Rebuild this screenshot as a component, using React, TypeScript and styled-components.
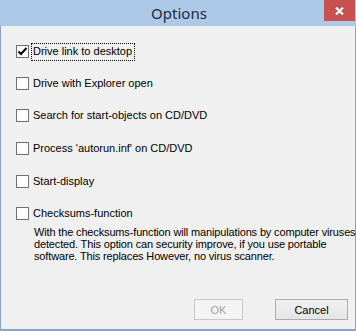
import { FC, ReactNode } from 'react';
import styled, { createGlobalStyle } from 'styled-components';

const GlobalStyle = createGlobalStyle`
    html, body {
        margin: 0;
        padding: 0;
        background: #f0f0f0;
    }
`;

const Window = styled.div`
    position: relative;
    width: 356px;
    height: 331px;
    box-sizing: border-box;
    border: 1px solid #8aa4c8;
    border-top: none;
    border-bottom-width: 2px;
    background: #f0f0f0;
    display: flex;
    flex-direction: column;
    font-family: 'Liberation Sans', Arial, sans-serif;
`;

const TitleBar = styled.div`
    height: 26px;
    margin: 0 -1px;
    background: #adc9e8;
    display: flex;
    align-items: center;
    justify-content: center;
    font-family: 'Noto Sans', 'Open Sans', sans-serif;
    font-size: 15px;
    color: #1e2a3a;
    padding-left: 2px;
`;

const CloseButton = styled.div`
    position: absolute;
    top: 0;
    right: 0;
    width: 31px;
    height: 21px;
    background: #c75050;
    display: flex;
    align-items: center;
    justify-content: center;
`;

const Body = styled.div`
    flex: 1;
    display: flex;
    flex-direction: column;
    padding: 19px 0 0 15px;
`;

const OptionList = styled.div`
    display: flex;
    flex-direction: column;
`;

const OptionRow = styled.div<{ $gap: number }>`
    display: flex;
    align-items: center;
    height: 13px;
    margin-top: ${p => p.$gap}px;
    font-size: 11px;
    color: #000;
`;

const Box = styled.div`
    width: 13px;
    height: 13px;
    box-sizing: border-box;
    border: 1px solid #707070;
    background: #fff;
    display: flex;
    align-items: center;
    justify-content: center;
    flex-shrink: 0;
`;

const Label = styled.span<{ $focused?: boolean }>`
    margin-left: 2px;
    padding: 1px 2px 2px 1px;
    border: 1px dotted ${p => (p.$focused ? '#000' : 'transparent')};
    line-height: 13px;
    white-space: nowrap;
`;

const Description = styled.div`
    margin: 6px 0 0 18px;
    font-size: 11px;
    line-height: 12px;
    letter-spacing: -0.15px;
    color: #000;
    white-space: nowrap;
`;

const Footer = styled.div`
    margin-top: auto;
    display: flex;
    justify-content: flex-end;
    gap: 32px;
    padding: 0 7px 9px 0;
`;

const Button = styled.div<{ $disabled?: boolean; $width: number }>`
    width: ${p => p.$width}px;
    height: 21px;
    box-sizing: border-box;
    border: 1px solid ${p => (p.$disabled ? '#c8c8c8' : '#acacac')};
    background: ${p => (p.$disabled ? '#f4f4f4' : 'linear-gradient(#f0f0f0, #e5e5e5)')};
    color: ${p => (p.$disabled ? '#a3a3a3' : '#000')};
    font-size: 11px;
    display: flex;
    align-items: center;
    justify-content: center;
`;

const Check: FC = () => (
    <svg width="11" height="11" viewBox="0 0 11 11">
        <path d="M1.5 5.5 L4 8 L9.5 2" fill="none" stroke="#000" strokeWidth="2" />
    </svg>
);

const Option: FC<{ gap: number; checked?: boolean; focused?: boolean; children: ReactNode }> = ({ gap, checked, focused, children }) => (
    <OptionRow $gap={gap}>
        <Box>{checked && <Check />}</Box>
        <Label $focused={focused}>{children}</Label>
    </OptionRow>
);

export default function App() {
    return (
        <>
            <GlobalStyle />
            <Window>
                <TitleBar>Options</TitleBar>
                <CloseButton>
                    <svg width="9" height="8" viewBox="0 0 9 8">
                        <path d="M1 0.5 L8 7.5 M8 0.5 L1 7.5" stroke="#fff" strokeWidth="2.2" />
                    </svg>
                </CloseButton>
                <Body>
                    <OptionList>
                        <Option gap={0} checked focused>Drive link to desktop</Option>
                        <Option gap={19}>Drive with Explorer open</Option>
                        <Option gap={19}>Search for start-objects on CD/DVD</Option>
                        <Option gap={20}>Process 'autorun.inf' on CD/DVD</Option>
                        <Option gap={20}>Start-display</Option>
                        <Option gap={19}>Checksums-function</Option>
                    </OptionList>
                    <Description>
                        With the checksums-function will manipulations by computer viruses<br />
                        detected. This option can security improve, if you use portable<br />
                        software. This replaces However, no virus scanner.
                    </Description>
                    <Footer>
                        <Button $disabled $width={49}>OK</Button>
                        <Button $width={73}>Cancel</Button>
                    </Footer>
                </Body>
            </Window>
        </>
    );
}
